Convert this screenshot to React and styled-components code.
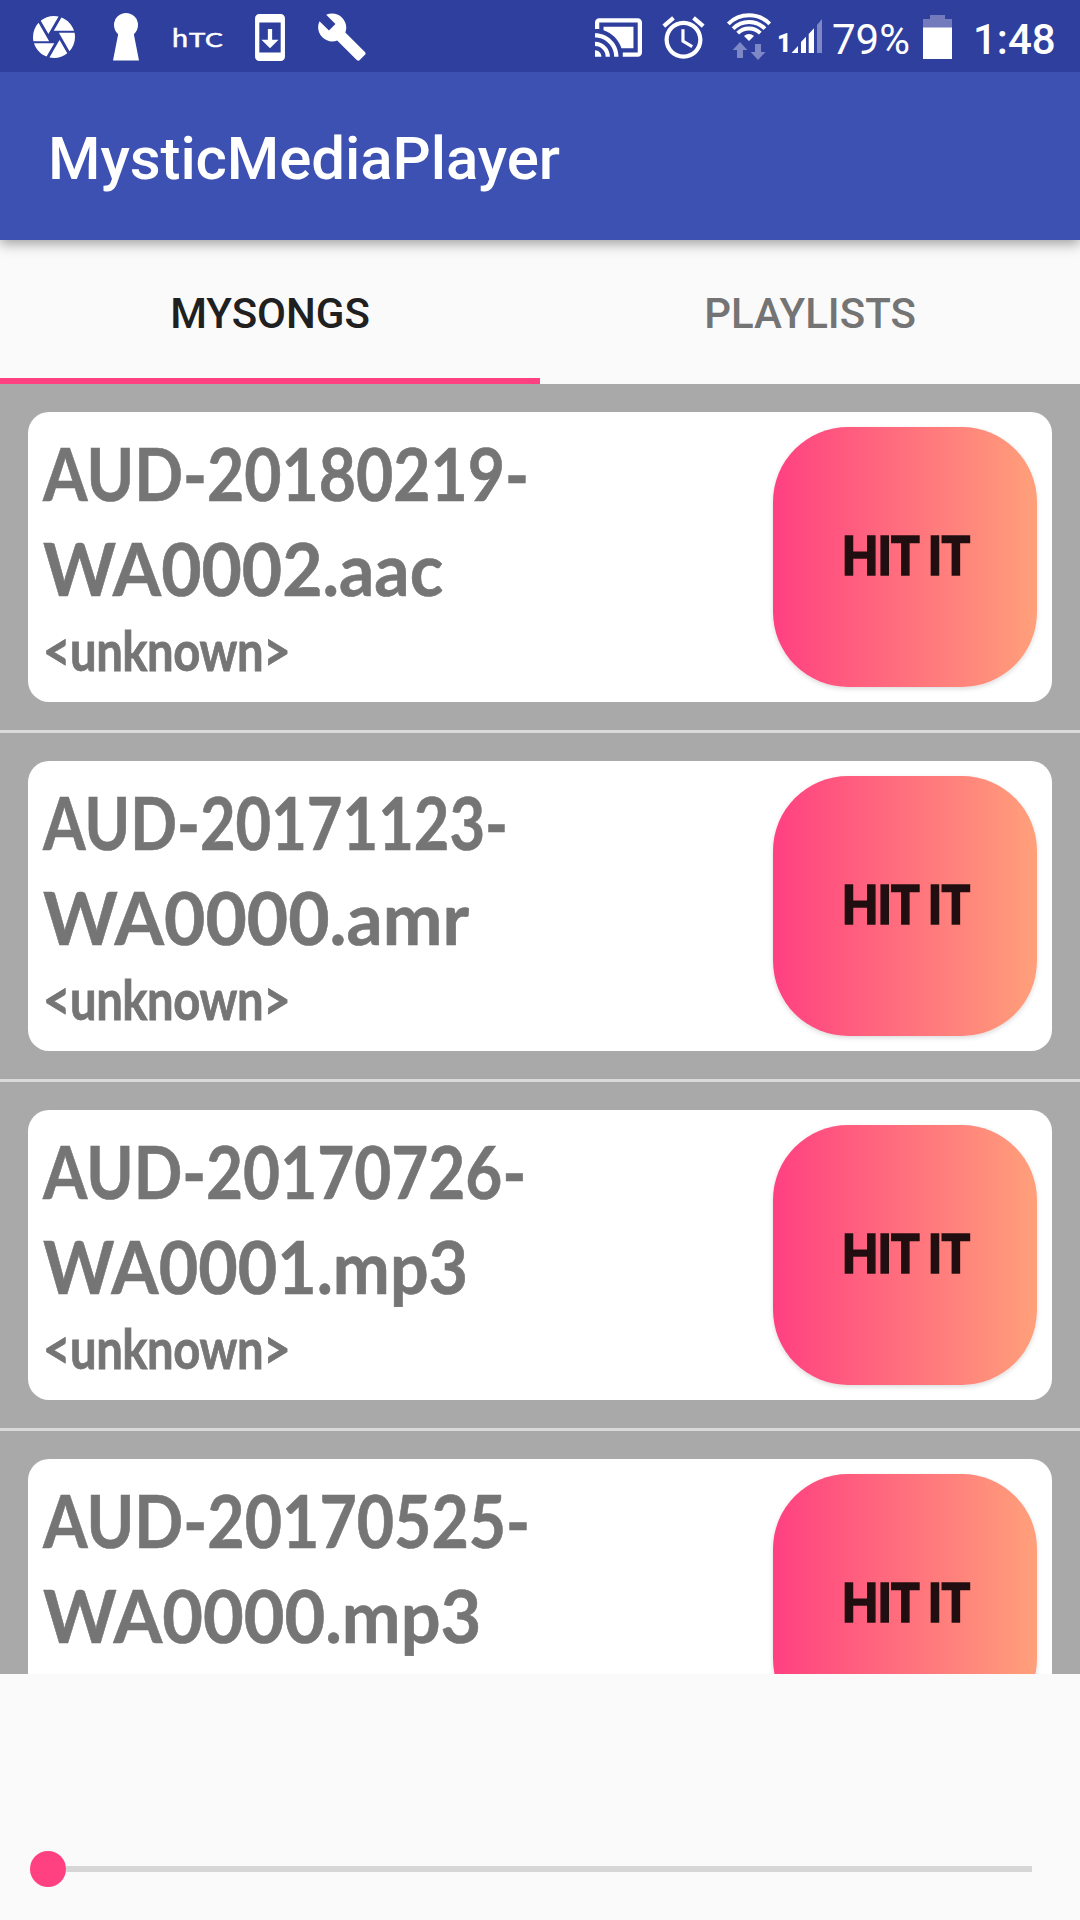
import React from "react";
import styled, { createGlobalStyle } from "styled-components";

const GlobalStyle = createGlobalStyle`
  *, *::before, *::after { box-sizing: border-box; }
  body { margin: 0; background: #fafafa; font-family: Roboto, sans-serif; }
`;

const Screen = styled.div`
  width: 1080px;
  height: 1920px;
  display: flex;
  flex-direction: column;
  overflow: hidden;
  background: #fafafa;
`;

const StatusBar = styled.div`
  flex: none;
  position: relative;
  z-index: 2;
  height: 72px;
  padding-top: 2px;
  display: flex;
  align-items: center;
  background: #2f3f9d;
  color: #fff;
`;

const StatusIcon = styled.svg`
  flex: none;
  display: block;
  margin-left: ${(p) => p.$gap}px;
  fill: #fff;
`;

const Brand = styled.span`
  flex: none;
  width: 50px;
  height: 26px;
  margin-left: ${(p) => p.$gap}px;
  display: flex;
  align-items: baseline;
  font: 400 24px/26px Lato, sans-serif;
  white-space: nowrap;
`;

const BrandLetter = styled.span`
  display: block;
  font-size: ${(p) => p.$size}px;
  width: ${(p) => p.$width}px;
  transform: scaleX(${(p) => p.$stretch});
  transform-origin: left;
  -webkit-text-stroke: 0.5px #fff;
`;

const StatusText = styled.span`
  flex: none;
  width: ${(p) => p.$width}px;
  margin-left: ${(p) => p.$gap}px;
  padding-top: ${(p) => p.$drop || 0}px;
  font-size: ${(p) => p.$size}px;
  font-weight: ${(p) => p.$weight};
  line-height: 48px;
  white-space: nowrap;
`;

const AppBar = styled.header`
  flex: none;
  position: relative;
  z-index: 1;
  height: 168px;
  padding: 6px 0 0 48px;
  display: flex;
  align-items: center;
  background: #3d51b3;
  box-shadow: 0 4px 12px rgba(0, 0, 0, 0.36);
`;

const Title = styled.h1`
  margin: 0;
  color: #fff;
  font-size: 60px;
  font-weight: 500;
  line-height: 72px;
  letter-spacing: -0.08px;
`;

const Tabs = styled.nav`
  flex: none;
  height: 144px;
  display: flex;
`;

const Tab = styled.button`
  flex: 1;
  border: 0;
  border-bottom: 6px solid ${(p) => (p.$active ? "#ff4081" : "transparent")};
  padding: 9px 0 0;
  background: none;
  color: ${(p) => (p.$active ? "#202020" : "#747474")};
  font: 500 42px/50px Roboto, sans-serif;
`;

const SongList = styled.ul`
  flex: none;
  height: 1290px;
  margin: 0;
  padding: 0;
  overflow: hidden;
  list-style: none;
  background: #a9a9a9;
`;

const SongRow = styled.li`
  padding: 28px;
  border-bottom: 3px solid #dadada;
`;

const Card = styled.article`
  height: 290px;
  padding: 15px;
  display: flex;
  justify-content: space-between;
  border-radius: 21px;
  background: #fff;
`;

const SongInfo = styled.div`
  width: 600px;
  margin-top: -1px;
  color: #757575;
  font-family: Lato, sans-serif;
  font-weight: 700;
  white-space: nowrap;
`;

const TitleLine = styled.div`
  width: max-content;
  font-size: 73px;
  line-height: 95px;
  transform: scaleX(${(p) => p.$condense});
  transform-origin: left;
  -webkit-text-stroke: 0.6px #757575;
`;

const Artist = styled.div`
  width: max-content;
  font-size: 55px;
  line-height: 69px;
  letter-spacing: -0.5px;
  transform: scaleX(0.858);
  transform-origin: left;
  -webkit-text-stroke: 0.8px #757575;
`;

const HitButton = styled.button`
  flex: none;
  width: 264px;
  height: 260px;
  padding: 0 0 5px;
  border: 0;
  border-radius: 75px;
  background: linear-gradient(90deg, #ff4081, #ffa07a);
  box-shadow: 0 2px 5px rgba(0, 0, 0, 0.14);
  color: #200e10;
  font: 900 54px/64px Lato, sans-serif;
`;

const HitLabel = styled.span`
  display: inline-block;
  letter-spacing: -1px;
  transform: scaleX(0.88);
  -webkit-text-stroke: 1.6px #200e10;
`;

const Player = styled.footer`
  flex: 1;
  display: flex;
  align-items: flex-end;
  padding: 0 48px 33px 30px;
`;

const Slider = styled.div`
  flex: 1;
  display: flex;
  align-items: center;
`;

const Thumb = styled.span`
  width: 36px;
  height: 36px;
  border-radius: 50%;
  background: #ff4081;
`;

const Track = styled.span`
  flex: 1;
  height: 6px;
  background: #d6d6d6;
`;

const songs = [
  { lines: [["AUD-20180219-", 0.88], ["WA0002.aac", 0.953]], artist: "<unknown>" },
  { lines: [["AUD-20171123-", 0.842], ["WA0000.amr", 0.977]], artist: "<unknown>" },
  { lines: [["AUD-20170726-", 0.875], ["WA0001.mp3", 0.933]], artist: "<unknown>" },
  { lines: [["AUD-20170525-", 0.882], ["WA0000.mp3", 0.962]] },
];

function Status() {
  return (
    <StatusBar>
      <StatusIcon $gap={33} width="42" height="42" viewBox="2 2 20 20">
        <path d="M9.4 10.5l4.77-8.26C13.47 2.09 12.75 2 12 2c-2.4 0-4.6.85-6.32 2.25l3.66 6.35.06-.1zM21.54 9c-.92-2.92-3.15-5.26-6-6.34L11.88 9h9.66zm.26 1h-7.49l.29.5 4.76 8.25C21 16.97 22 14.61 22 12c0-.69-.07-1.35-.2-2zM8.54 12l-3.9-6.75C3.01 7.03 2 9.39 2 12c0 .69.07 1.35.2 2h7.49l-1.15-2zm-6.08 3c.92 2.92 3.15 5.26 6 6.34L12.12 15H2.46zm11.27 0l-3.9 6.76c.7.15 1.42.24 2.17.24 2.4 0 4.6-.85 6.32-2.25l-3.66-6.35-.93 1.6z" />
      </StatusIcon>
      <StatusIcon $gap={38} width="26" height="48" viewBox="0 0 26 48">
        <circle cx="13" cy="12" r="12" />
        <path d="M5 18h16v4l5 25.500H0L5 22z" />
      </StatusIcon>
      <Brand $gap={33}>
        <BrandLetter $size={25} $width={17} $stretch={1.15}>h</BrandLetter>
        <BrandLetter $size={19} $width={16} $stretch={1.45}>T</BrandLetter>
        <BrandLetter $size={19} $width={16} $stretch={1.4}>C</BrandLetter>
      </Brand>
      <StatusIcon $gap={33} width="30" height="47" viewBox="5 1 14 22">
        <path d="M17 1.01L7 1c-1.1 0-2 .9-2 2v18c0 1.1.9 2 2 2h10c1.1 0 2-.9 2-2V3c0-1.1-.9-1.99-2-1.99zM17 19H7V5h10v14zm-1-6h-3V8h-2v5H8l4 4 4-4z" />
      </StatusIcon>
      <StatusIcon $gap={33} width="48" height="48" viewBox="0.9 1 22.3 22">
        <path d="M22.7 19l-9.1-9.1c.9-2.3.4-5-1.5-6.9-2-2-5-2.4-7.4-1.3L9 6 6 9 1.6 4.7C.4 7.1.9 10.1 2.9 12.1c1.9 1.9 4.6 2.4 6.9 1.5l9.1 9.1c.4.4 1 .4 1.4 0l2.3-2.3c.5-.4.5-1.1.1-1.4z" />
      </StatusIcon>
      <StatusIcon $gap={229} width="47" height="39" viewBox="1 3 22 18">
        <path d="M1 18v3h3c0-1.66-1.34-3-3-3zm0-4v2c2.76 0 5 2.24 5 5h2c0-3.87-3.13-7-7-7zm18-7H5v1.63c3.96 1.28 7.09 4.41 8.37 8.37H19V7zM1 10v2c4.97 0 9 4.03 9 9h2c0-6.08-4.93-11-11-11zm20-7H3c-1.1 0-2 .9-2 2v3h2V5h18v14h-7v2h7c1.1 0 2-.9 2-2V5c0-1.1-.9-2-2-2z" />
      </StatusIcon>
      <StatusIcon $gap={20} width="43" height="43" viewBox="1.8 1.7 20.4 20.4">
        <path d="M22 5.72l-4.6-3.86-1.29 1.53 4.6 3.86L22 5.72zM7.88 3.39L6.6 1.86 2 5.71l1.29 1.53 4.59-3.85zM12.5 8H11v6l4.75 2.85.75-1.23-4-2.37V8zM12 4c-4.97 0-9 4.03-9 9s4.02 9 9 9c4.97 0 9-4.03 9-9s-4.03-9-9-9zm0 16c-3.87 0-7-3.13-7-7s3.13-7 7-7 7 3.13 7 7-3.13 7-7 7z" />
      </StatusIcon>
      <StatusIcon $gap={21} width="46" height="50" viewBox="726 12 46 50">
        <g fill="none" stroke="#fff" strokeWidth="3.9">
          <path d="M728.3 23.8a29.3 29.3 0 0 1 41.4 0" />
          <path d="M733.1 28.6a22.5 22.5 0 0 1 31.8 0" />
          <path d="M737.7 33.2a16 16 0 0 1 22.6 0" />
        </g>
        <path d="M744 36a7.5 7.5 0 0 1 10 0L749 41z" />
        <path fill="#7f88c6" d="M740 42l7.3 8H743v8h-6v-8h-4.300zM755 44h6v8h4.500l-7.500 8-7.300-8h4.300z" />
      </StatusIcon>
      <StatusText $gap={5} $width={14} $size={25} $weight={900} $drop={14}>1</StatusText>
      <StatusIcon $gap={0} width="31" height="36" viewBox="791 18 31 36">
        <path d="M791.500 52l6.500-7v7zM801 41l5-5.300V52h-5zM808.700 33l5.300-5.700V52h-5.300z" />
        <path fill="#7f88c6" d="M817 24l5-6v34h-5z" />
      </StatusIcon>
      <StatusText $gap={10} $width={80} $size={42} $weight={400} $drop={6}>79%</StatusText>
      <StatusIcon $gap={11} width="29" height="44" viewBox="0 0 29 44">
        <path fill="#737bbc" d="M7 0h15v4h7v9H0V4h7z" />
        <path d="M0 12.500h29V44H0z" />
      </StatusIcon>
      <StatusText $gap={21} $width={90} $size={42} $weight={500} $drop={6}>1:48</StatusText>
    </StatusBar>
  );
}

function Song({ song }) {
  return (
    <SongRow>
      <Card>
        <SongInfo>
          {song.lines.map(([text, condense]) => (
            <TitleLine key={text} $condense={condense}>{text}</TitleLine>
          ))}
          {song.artist && <Artist>{song.artist}</Artist>}
        </SongInfo>
        <HitButton>
          <HitLabel>HIT IT</HitLabel>
        </HitButton>
      </Card>
    </SongRow>
  );
}

export default function App() {
  return (
    <>
      <GlobalStyle />
      <Screen>
        <Status />
        <AppBar>
          <Title>MysticMediaPlayer</Title>
        </AppBar>
        <Tabs>
          <Tab $active>MYSONGS</Tab>
          <Tab>PLAYLISTS</Tab>
        </Tabs>
        <SongList>
          {songs.map((song) => (
            <Song key={song.lines[0][0]} song={song} />
          ))}
        </SongList>
        <Player>
          <Slider>
            <Thumb />
            <Track />
          </Slider>
        </Player>
      </Screen>
    </>
  );
}
